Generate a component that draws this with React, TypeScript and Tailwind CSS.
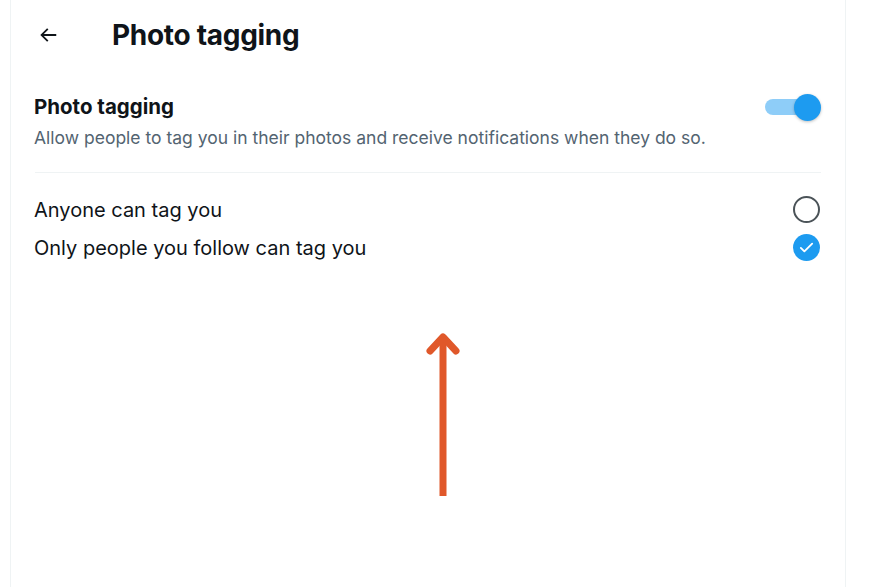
import React from "react";

const font = "[font-family:Inter,'Noto_Sans',sans-serif]";

export default function App() {
  return (
    <div className={`w-[881px] h-[587px] bg-white overflow-hidden ${font}`}>
      <div className="ml-[10px] w-[836px] h-full border-x border-[#eff3f4] flex flex-col">
        {/* header */}
        <div className="flex items-center h-[69px] pl-[26px]">
          <svg width="22" height="22" viewBox="0 0 24 24" className="text-[#0f1419]">
            <path
              d="M7.414 13l5.043 5.04-1.414 1.42L3.586 12l7.457-7.46 1.414 1.42L7.414 11H21v2H7.414z"
              fill="currentColor"
            />
          </svg>
          <div className="ml-[53px] text-[28px] font-bold text-[#0f1419] tracking-[-0.3px]">
            Photo tagging
          </div>
        </div>

        {/* setting */}
        <div className="flex items-start justify-between pl-[23px] pr-[24px] pt-[23px]">
          <div className="flex flex-col">
            <div className="text-[20.5px] font-bold text-[#0f1419] leading-[30px]">Photo tagging</div>
            <div className="text-[17.5px] text-[#536471] leading-[26px] mt-[3px]">
              Allow people to tag you in their photos and receive notifications when they do so.
            </div>
          </div>
          <div className="relative w-[56px] h-[28px] mt-[1px] flex items-center">
            <div className="w-[50px] h-[16px] rounded-full bg-[#8ecdf8]" />
            <div className="absolute right-0 top-[1px] w-[27px] h-[27px] rounded-full bg-[#1d9bf0] shadow-[0_1px_3px_rgba(0,0,0,0.25)]" />
          </div>
        </div>

        <div className="mx-[24px] mt-[21px] border-t border-[#eff3f4]" />

        {/* options */}
        <div className="flex flex-col pl-[23px] pr-[24px] pt-[23px] gap-[11px]">
          <div className="flex items-center justify-between h-[27px]">
            <span className="text-[20px] text-[#0f1419]">Anyone can tag you</span>
            <div className="w-[27px] h-[27px] rounded-full border-[2.5px] border-[#4b5358] mr-[1px]" />
          </div>
          <div className="flex items-center justify-between h-[27px]">
            <span className="text-[20px] text-[#0f1419]">Only people you follow can tag you</span>
            <div className="w-[27px] h-[27px] rounded-full bg-[#1d9bf0] flex items-center justify-center mr-[1px]">
              <svg width="17" height="17" viewBox="0 0 24 24">
                <path d="M4 12.5l5 5L20 6.5" fill="none" stroke="white" strokeWidth="2.6" strokeLinecap="round" strokeLinejoin="round" />
              </svg>
            </div>
          </div>
        </div>

        {/* annotation arrow */}
        <div className="flex justify-center pl-[30px] mt-[70px]">
          <svg width="40" height="170" viewBox="0 0 40 170">
            <path d="M20 6 V165" stroke="#e0582a" strokeWidth="7" fill="none" />
            <path d="M7 20 L20 6 L33 20" stroke="#e0582a" strokeWidth="7" fill="none" strokeLinecap="round" strokeLinejoin="round" />
          </svg>
        </div>
      </div>
    </div>
  );
}
